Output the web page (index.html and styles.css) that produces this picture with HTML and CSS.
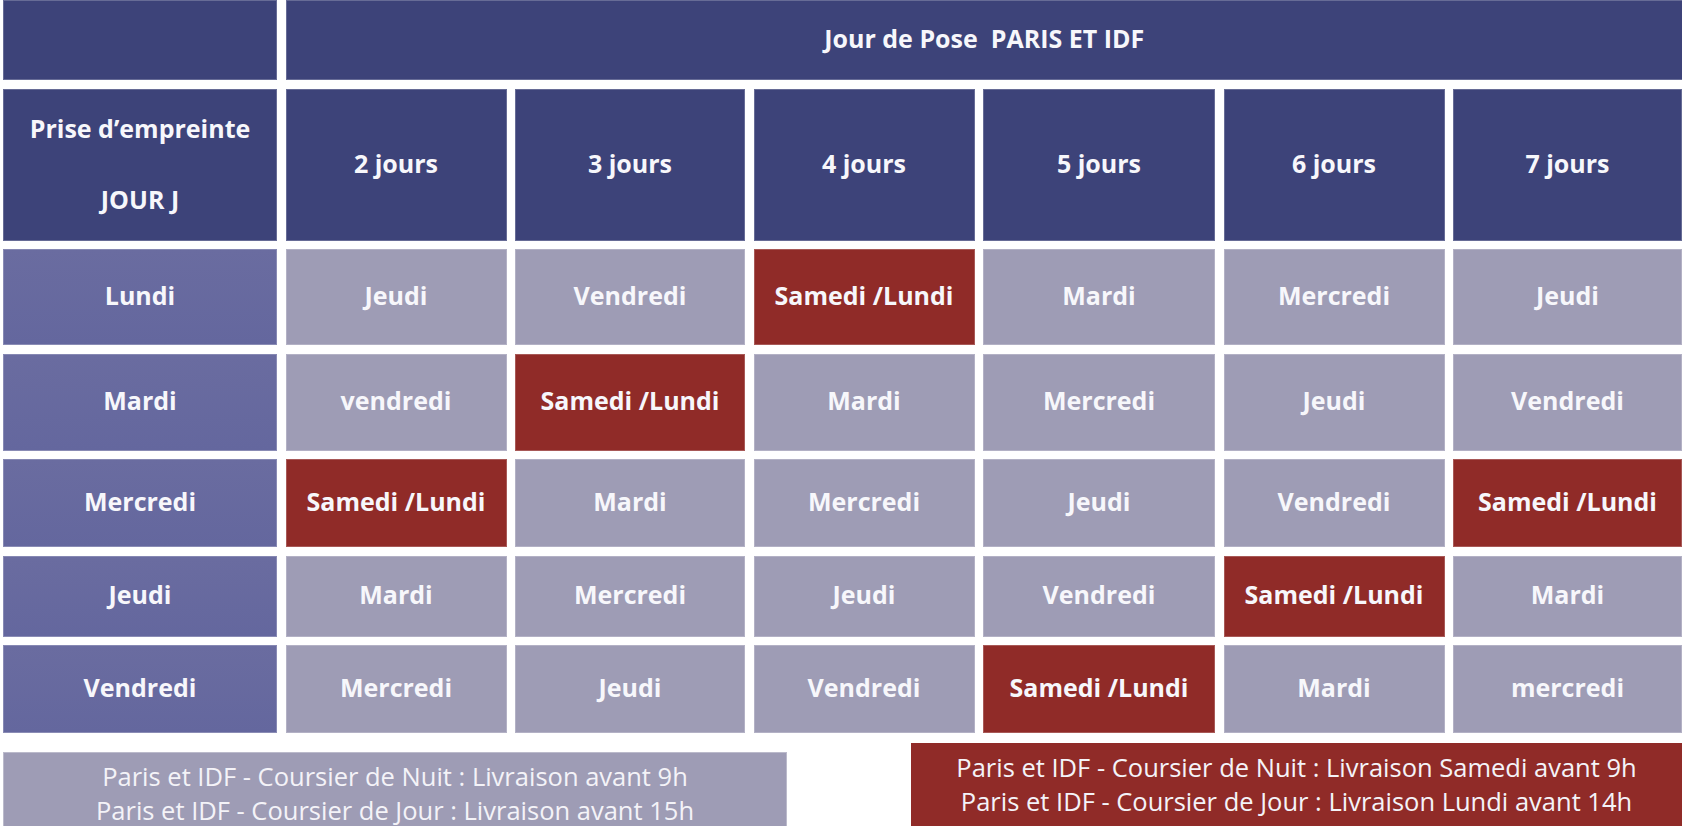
FILE: index.html
```html
<!DOCTYPE html>
<html lang="fr">
<head>
<meta charset="utf-8">
<title>Jour de Pose Paris et IDF</title>
<link rel="stylesheet" href="styles.css">
</head>
<body>
<div class="table">
  <div class="cell head"></div>
  <div class="cell head span">Jour de Pose&nbsp; PARIS ET IDF</div>

  <div class="cell head stack"><p>Prise d’empreinte</p><p>JOUR J</p></div>
  <div class="cell head">2 jours</div>
  <div class="cell head">3 jours</div>
  <div class="cell head">4 jours</div>
  <div class="cell head">5 jours</div>
  <div class="cell head">6 jours</div>
  <div class="cell head">7 jours</div>

  <div class="cell day">Lundi</div>
  <div class="cell light">Jeudi</div>
  <div class="cell light">Vendredi</div>
  <div class="cell red">Samedi /Lundi</div>
  <div class="cell light">Mardi</div>
  <div class="cell light">Mercredi</div>
  <div class="cell light">Jeudi</div>

  <div class="cell day">Mardi</div>
  <div class="cell light">vendredi</div>
  <div class="cell red">Samedi /Lundi</div>
  <div class="cell light">Mardi</div>
  <div class="cell light">Mercredi</div>
  <div class="cell light">Jeudi</div>
  <div class="cell light">Vendredi</div>

  <div class="cell day">Mercredi</div>
  <div class="cell red">Samedi /Lundi</div>
  <div class="cell light">Mardi</div>
  <div class="cell light">Mercredi</div>
  <div class="cell light">Jeudi</div>
  <div class="cell light">Vendredi</div>
  <div class="cell red">Samedi /Lundi</div>

  <div class="cell day">Jeudi</div>
  <div class="cell light">Mardi</div>
  <div class="cell light">Mercredi</div>
  <div class="cell light">Jeudi</div>
  <div class="cell light">Vendredi</div>
  <div class="cell red">Samedi /Lundi</div>
  <div class="cell light">Mardi</div>

  <div class="cell day">Vendredi</div>
  <div class="cell light">Mercredi</div>
  <div class="cell light">Jeudi</div>
  <div class="cell light">Vendredi</div>
  <div class="cell red">Samedi /Lundi</div>
  <div class="cell light">Mardi</div>
  <div class="cell light">mercredi</div>
</div>

<div class="legends">
  <div class="legend legend-light">
    <span class="line">Paris et IDF - Coursier de Nuit : Livraison avant 9h</span>
    <span class="line">Paris et IDF - Coursier de Jour : Livraison avant 15h</span>
  </div>
  <div class="legend legend-red">
    <span class="line">Paris et IDF - Coursier de Nuit : Livraison Samedi avant 9h</span>
    <span class="line">Paris et IDF - Coursier de Jour : Livraison Lundi avant 14h</span>
  </div>
</div>
</body>
</html>
```

FILE: styles.css
```css
html, body {
  margin: 0;
  padding: 0;
  background: #ffffff;
}

body {
  padding-left: 3px;
  font-family: "Open Sans", "Noto Sans", "DejaVu Sans", sans-serif;
  overflow: hidden;
}

.table {
  display: grid;
  grid-template-columns: 274px 221px 230px 221px 232px 221px 229px;
  grid-template-rows: 80px 152px 96px 97px 88px 81px 88px;
  column-gap: 8.5px;
  row-gap: 8.5px;
}

.cell {
  box-sizing: border-box;
  display: flex;
  align-items: center;
  justify-content: center;
  text-align: center;
  color: #f7f7fb;
  font-weight: 700;
  font-size: 25px;
  padding-bottom: 4px;
  border: 1px solid rgba(255, 255, 255, 0.22);
}

.head {
  background: #3d4379;
}

.span {
  grid-column: 2 / span 6;
  border-right: none;
}

.stack {
  flex-direction: column;
  gap: 0;
  padding-bottom: 2px;
}

.stack p {
  margin: 0;
  line-height: 71px;
}

.day {
  background: linear-gradient(180deg, #6a6ca0 0%, #64679e 100%);
}

.light {
  background: #9e9cb5;
}

.red {
  background: #902b28;
}

.legends {
  display: flex;
  justify-content: space-between;
  align-items: flex-start;
}

.legend {
  box-sizing: border-box;
  display: flex;
  flex-direction: column;
  align-items: center;
  color: #f4f3f8;
  font-size: 25.5px;
  font-weight: 400;
  line-height: 34px;
  padding: 6px 0 20px;
}

.legend-light {
  width: 784px;
  margin-top: 19px;
  background: #9e9cb5;
  border: 1px solid rgba(255, 255, 255, 0.3);
}

.legend-red {
  width: 771px;
  margin-top: 10px;
  background: #902b28;
  padding-top: 7px;
}

.line {
  white-space: nowrap;
}
```
